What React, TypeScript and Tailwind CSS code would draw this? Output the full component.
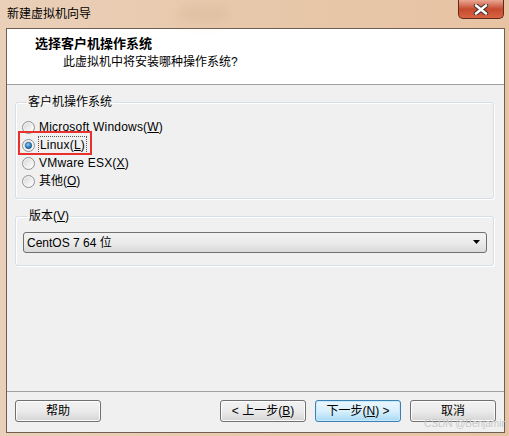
import React from "react";

const font = { fontFamily: '"Liberation Sans", "Noto Sans CJK SC", sans-serif' };

const Radio = ({ checked }: { checked?: boolean }) => (
  <svg width="13" height="13" viewBox="0 0 13 13" className="shrink-0">
    <defs>
      <linearGradient id={checked ? "rg-on" : "rg-off"} x1="0" y1="0" x2="1" y2="1">
        <stop offset="0" stopColor="#d9d9d9" />
        <stop offset="1" stopColor="#ffffff" />
      </linearGradient>
      <radialGradient id="dot" cx="0.4" cy="0.35" r="0.7">
        <stop offset="0" stopColor="#8fd3fa" />
        <stop offset="0.6" stopColor="#2f83c2" />
        <stop offset="1" stopColor="#154d80" />
      </radialGradient>
    </defs>
    <circle cx="6.5" cy="6.5" r="6" fill="#f4f4f4" stroke="#8f8f8f" />
    <circle cx="6.5" cy="6.5" r="4.6" fill={`url(#${checked ? "rg-on" : "rg-off"})`} />
    {checked && <circle cx="6.5" cy="6.5" r="3.2" fill="url(#dot)" stroke="#1c4f7c" strokeWidth="0.6" />}
  </svg>
);

const Btn = ({ children, primary }: { children: React.ReactNode; primary?: boolean }) => (
  <div
    className={
      "w-[86px] h-[22px] rounded-[3px] border flex items-center justify-center text-[12px] text-black " +
      (primary
        ? "border-[#3c7fb1] bg-gradient-to-b from-[#eaf6fd] via-[#d9f0fc] to-[#a7d9f5] shadow-[inset_0_0_0_1px_#c6e9fb]"
        : "border-[#707070] bg-gradient-to-b from-[#f2f2f2] via-[#ebebeb] to-[#d5d5d5] shadow-[inset_0_0_0_1px_#fcfcfc]")
    }
  >
    {children}
  </div>
);

export default function App() {
  return (
    <div style={font} className="relative w-[509px] h-[436px] flex flex-col pb-[3px] bg-gradient-to-r from-[#ead0b9] via-[#e8c8aa] to-[#e6c3a3] overflow-hidden">
      {/* title bar */}
      <div className="h-[28px] shrink-0 flex items-center pl-[7px] text-[12px] text-black">
        新建虚拟机向导
        <div className="ml-[88px] w-[50px] h-[14px] rounded-full bg-[#dbb89a] blur-[6px] opacity-60" />
      </div>

      {/* close button */}
      <div className="absolute left-[458px] top-0 w-[46px] h-[19px] rounded-b-[5px] border border-t-0 border-[#5e2a1f] bg-gradient-to-b from-[#e9a792] via-[#c64a30] to-[#d9633f] flex items-center justify-center">
        <svg width="16" height="11" viewBox="0 0 16 11">
          <path d="M3 1.5 L13 9.5 M13 1.5 L3 9.5" stroke="#3b2a28" strokeWidth="4.4" strokeLinecap="round" />
          <path d="M3 1.5 L13 9.5 M13 1.5 L3 9.5" stroke="#ffffff" strokeWidth="2.6" strokeLinecap="round" />
        </svg>
      </div>

      {/* dialog client area */}
      <div className="flex-1 mx-[6px] mr-[4px] border border-[#705e52] flex flex-col bg-[#f0f0f0] text-[12px] leading-[16px] text-black">
        {/* header */}
        <div className="h-[56px] shrink-0 bg-white border-b border-[#a0a0a0] pt-[7px]">
          <div className="pl-[28px] text-[13px] font-bold">选择客户机操作系统</div>
          <div className="pl-[56px] mt-[2px]">此虚拟机中将安装哪种操作系统?</div>
        </div>

        {/* body */}
        <div className="flex-1 flex flex-col pl-[8px] pr-[10px] pt-[9px]">
          <fieldset className="border border-[#d5dfe5] rounded-[3px] pl-[6px] pt-[8px] pb-[8px] shadow-[inset_1px_1px_0_#ffffff,1px_1px_0_#ffffff]">
            <legend className="ml-[5px] px-[1px]">客户机操作系统</legend>
            <div className="h-[18px] flex items-center gap-[4px]">
              <Radio />
              <span className="tracking-[0.2px]">
                Microsoft Windows(<span className="underline">W</span>)
              </span>
            </div>
            <div className="relative h-[18px] flex items-center gap-[4px]">
              <Radio checked />
              <span className="outline outline-1 outline-dotted outline-[#555] px-[1px] tracking-[0.2px]">
                Linux(<span className="underline">L</span>)
              </span>
              <div className="absolute left-[-4px] top-[-5px] w-[74px] h-[24px] border-2 border-[#e8312f]" />
            </div>
            <div className="h-[18px] flex items-center gap-[4px]">
              <Radio />
              <span className="tracking-[0.2px]">
                VMware ESX(<span className="underline">X</span>)
              </span>
            </div>
            <div className="h-[18px] flex items-center gap-[4px]">
              <Radio />
              <span>
                其他(<span className="underline">O</span>)
              </span>
            </div>
          </fieldset>

          <fieldset className="mt-[9px] border border-[#d5dfe5] rounded-[3px] pl-[7px] pr-[6px] pt-[8px] pb-[12px] shadow-[inset_1px_1px_0_#ffffff,1px_1px_0_#ffffff]">
            <legend className="ml-[5px] px-[1px]">
              版本(<span className="underline">V</span>)
            </legend>
            <div className="h-[21px] rounded-[3px] border border-[#707070] bg-gradient-to-b from-[#f2f2f2] via-[#ebebeb] to-[#dadada] flex items-center pl-[3px] pr-[5px]">
              <span className="flex-1">CentOS 7 64 位</span>
              <svg width="8" height="5" viewBox="0 0 8 5">
                <path d="M0 0 H7 L3.5 4 Z" fill="#000" />
              </svg>
            </div>
          </fieldset>

          <div className="flex-1" />
        </div>

        {/* footer */}
        <div className="shrink-0 border-t border-[#a0a0a0] pt-[8px] pb-[10px] pl-[8px] pr-[8px] flex items-center">
          <Btn>帮助</Btn>
          <div className="flex-1" />
          <div className="flex gap-[9px]">
            <Btn>
              &lt; 上一步(<span className="underline">B</span>)
            </Btn>
            <Btn primary>
              下一步(<span className="underline">N</span>) &gt;
            </Btn>
            <Btn>取消</Btn>
          </div>
        </div>
      </div>

      {/* watermark */}
      <div className="absolute right-[2px] bottom-[6px] text-[10px] leading-[12px] text-[#c9c9c9]">CSDN @Benjamin</div>
    </div>
  );
}
